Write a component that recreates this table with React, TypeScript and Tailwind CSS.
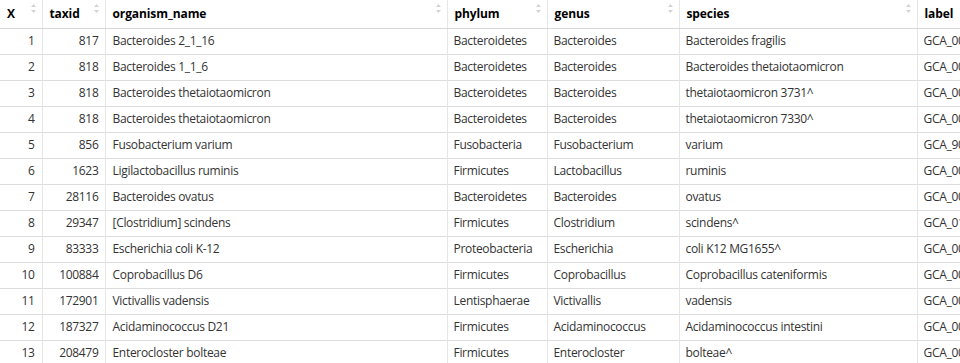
import React from "react";

type Row = {
  x: number;
  taxid: number;
  organism: string;
  phylum: string;
  genus: string;
  species: string;
  label: string;
};

const rows: Row[] = [
  { x: 1, taxid: 817, organism: "Bacteroides 2_1_16", phylum: "Bacteroidetes", genus: "Bacteroides", species: "Bacteroides fragilis", label: "GCA_000157015.1" },
  { x: 2, taxid: 818, organism: "Bacteroides 1_1_6", phylum: "Bacteroidetes", genus: "Bacteroides", species: "Bacteroides thetaiotaomicron", label: "GCA_000158035.1" },
  { x: 3, taxid: 818, organism: "Bacteroides thetaiotaomicron", phylum: "Bacteroidetes", genus: "Bacteroides", species: "thetaiotaomicron 3731^", label: "GCA_000011065.1" },
  { x: 4, taxid: 818, organism: "Bacteroides thetaiotaomicron", phylum: "Bacteroidetes", genus: "Bacteroides", species: "thetaiotaomicron 7330^", label: "GCA_000011065.2" },
  { x: 5, taxid: 856, organism: "Fusobacterium varium", phylum: "Fusobacteria", genus: "Fusobacterium", species: "varium", label: "GCA_900637755.1" },
  { x: 6, taxid: 1623, organism: "Ligilactobacillus ruminis", phylum: "Firmicutes", genus: "Lactobacillus", species: "ruminis", label: "GCA_000224985.1" },
  { x: 7, taxid: 28116, organism: "Bacteroides ovatus", phylum: "Bacteroidetes", genus: "Bacteroides", species: "ovatus", label: "GCA_000154125.1" },
  { x: 8, taxid: 29347, organism: "[Clostridium] scindens", phylum: "Firmicutes", genus: "Clostridium", species: "scindens^", label: "GCA_012221865.1" },
  { x: 9, taxid: 83333, organism: "Escherichia coli K-12", phylum: "Proteobacteria", genus: "Escherichia", species: "coli K12 MG1655^", label: "GCA_000005845.2" },
  { x: 10, taxid: 100884, organism: "Coprobacillus D6", phylum: "Firmicutes", genus: "Coprobacillus", species: "Coprobacillus cateniformis", label: "GCA_000157935.1" },
  { x: 11, taxid: 172901, organism: "Victivallis vadensis", phylum: "Lentisphaerae", genus: "Victivallis", species: "vadensis", label: "GCA_000173915.1" },
  { x: 12, taxid: 187327, organism: "Acidaminococcus D21", phylum: "Firmicutes", genus: "Acidaminococcus", species: "Acidaminococcus intestini", label: "GCA_000230275.1" },
  { x: 13, taxid: 208479, organism: "Enterocloster bolteae", phylum: "Firmicutes", genus: "Enterocloster", species: "bolteae^", label: "GCA_000154365.1" },
];

const columns = [
  { key: "X", width: "w-[42px]" },
  { key: "taxid", width: "w-[63px]" },
  { key: "organism_name", width: "w-[342px]" },
  { key: "phylum", width: "w-[100px]" },
  { key: "genus", width: "w-[132px]" },
  { key: "species", width: "w-[238px]" },
  { key: "label", width: "w-[160px]" },
];

const SortIcon = () => (
  <svg
    width="7"
    height="11"
    viewBox="0 0 7 11"
    className="absolute right-[5px] top-[3px]"
  >
    <path d="M3.5 1 L6 4 L1 4 Z" fill="#d3d3d3" />
    <path d="M3.5 10 L6 7 L1 7 Z" fill="#d3d3d3" />
  </svg>
);

export default function App() {
  return (
    <div className="w-[960px] h-[363px] overflow-hidden bg-white font-['Open_Sans',sans-serif]">
      <table className="table-fixed border-collapse w-[1077px] text-[12px] text-[#333]">
        <colgroup>
          {columns.map((c) => (
            <col key={c.key} className={c.width} />
          ))}
        </colgroup>
        <thead>
          <tr className="h-[28px]">
            {columns.map((c, i) => (
              <th
                key={c.key}
                className={`relative text-left font-bold text-black px-[7px] tracking-[-0.1px] border-b border-[#d6d6d6] ${
                  i < columns.length - 1 ? "border-r border-r-[#e6e6e6]" : ""
                }`}
              >
                {c.key}
                {i < columns.length - 1 && <SortIcon />}
              </th>
            ))}
          </tr>
        </thead>
        <tbody className="tracking-[-0.3px]">
          {rows.map((r) => (
            <tr key={r.x} className="h-[26px] border-b border-[#ddd]">
              <td className="text-right px-[7px] border-r border-[#e6e6e6]">{r.x}</td>
              <td className="text-right px-[6px] border-r border-[#e6e6e6]">{r.taxid}</td>
              <td className="px-[7px] border-r border-[#e6e6e6] whitespace-nowrap">{r.organism}</td>
              <td className="px-[6px] border-r border-[#e6e6e6] whitespace-nowrap">{r.phylum}</td>
              <td className="px-[6px] border-r border-[#e6e6e6] whitespace-nowrap">{r.genus}</td>
              <td className="px-[6px] border-r border-[#e6e6e6] whitespace-nowrap">{r.species}</td>
              <td className="px-[6px] whitespace-nowrap">{r.label}</td>
            </tr>
          ))}
        </tbody>
      </table>
    </div>
  );
}
